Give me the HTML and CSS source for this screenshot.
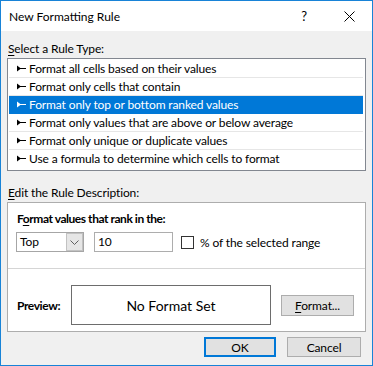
FILE: index.html
```html
<!DOCTYPE html>
<html lang="en">
  <head>
    <meta charset="UTF-8" />
    <meta name="viewport" content="width=device-width, initial-scale=1.0" />
    <title>New Formatting Rule</title>
    <link rel="stylesheet" href="styles.css">
  </head>
  <body>
    <div class="dialog">
      <!-- Title bar -->
      <header class="titlebar">
        <span class="title">New Formatting Rule</span>
        <span class="caption-btn help">?</span>
        <span class="caption-btn close">
          <svg width="11" height="11" viewBox="0 0 11 11">
            <path d="M0.5 0.5 L10.5 10.5 M10.5 0.5 L0.5 10.5" stroke="#000" stroke-width="1" fill="none" />
          </svg>
        </span>
      </header>

      <main class="content">
        <div class="label"><u>S</u>elect a Rule Type:</div>
        <ul class="rule-list">
          <li><svg class="arrow" width="9" height="7" viewBox="0 0 9 7"><path d="M0 0.5 L4 3.5 L0 6.5 Z M3 3 H9 V4 H3 Z" /></svg>Format all cells based on their values</li>
          <li><svg class="arrow" width="9" height="7" viewBox="0 0 9 7"><path d="M0 0.5 L4 3.5 L0 6.5 Z M3 3 H9 V4 H3 Z" /></svg>Format only cells that contain</li>
          <li class="selected"><svg class="arrow" width="9" height="7" viewBox="0 0 9 7"><path d="M0 0.5 L4 3.5 L0 6.5 Z M3 3 H9 V4 H3 Z" /></svg>Format only top or bottom ranked values</li>
          <li><svg class="arrow" width="9" height="7" viewBox="0 0 9 7"><path d="M0 0.5 L4 3.5 L0 6.5 Z M3 3 H9 V4 H3 Z" /></svg>Format only values that are above or below average</li>
          <li><svg class="arrow" width="9" height="7" viewBox="0 0 9 7"><path d="M0 0.5 L4 3.5 L0 6.5 Z M3 3 H9 V4 H3 Z" /></svg>Format only unique or duplicate values</li>
          <li class="last"><svg class="arrow" width="9" height="7" viewBox="0 0 9 7"><path d="M0 0.5 L4 3.5 L0 6.5 Z M3 3 H9 V4 H3 Z" /></svg>Use a formula to determine which cells to format</li>
        </ul>

        <div class="label label-edit"><u>E</u>dit the Rule Description:</div>
        <section class="group">
          <div class="group-top">
            <div class="heading">F<u>o</u>rmat values that rank in the:</div>
            <div class="controls">
              <div class="select">
                <span class="select-text">Top</span>
                <span class="select-btn">
                  <svg width="9" height="5" viewBox="0 0 9 5">
                    <path d="M0.5 0.5 L4.5 4.5 L8.5 0.5" stroke="#606060" stroke-width="1" fill="none" />
                  </svg>
                </span>
              </div>
              <div class="textbox">10</div>
              <span class="checkbox"></span>
              <span class="check-label">% of the selected ran<u>g</u>e</span>
            </div>
          </div>
          <div class="group-bottom">
            <span class="preview-label">Preview:</span>
            <div class="preview-box">No Format Set</div>
            <button class="btn btn-format"><u>F</u>ormat...</button>
          </div>
        </section>

        <div class="actions">
          <button class="btn btn-ok">OK</button>
          <button class="btn btn-cancel">Cancel</button>
        </div>
      </main>
    </div>
  </body>
</html>
```

FILE: styles.css
```css
/* General */
* {
  box-sizing: border-box;
  margin: 0;
  padding: 0;
}

body {
  font-family: Lato, "Noto Sans", sans-serif;
  font-size: 12px;
  letter-spacing: -0.12px;
  color: #000;
  background: #fff;
}

u {
  text-decoration: underline;
  text-underline-offset: 2px;
}

.dialog {
  width: 373px;
  height: 366px;
  border: 1px solid #1883d7;
  background: #f0f0f0;
}

/* Title bar */
.titlebar {
  display: flex;
  align-items: center;
  height: 30px;
  background: #fff;
}

.title {
  flex: 1;
  padding-left: 8px;
  font-size: 12px;
  letter-spacing: 0;
}

.caption-btn {
  display: flex;
  align-items: center;
  justify-content: center;
  width: 46px;
  height: 30px;
}

.help {
  padding-left: 2px;
  font-size: 13px;
}

/* Content */
.content {
  padding: 10px 6px 0;
}

.label {
  height: 15px;
  line-height: 15px;
  margin-bottom: 2px;
  padding-left: 1px;
}

.label-edit {
  margin-top: 14px;
}

/* Rule list */
.rule-list {
  list-style: none;
  background: #fff;
  border: 1px solid #828790;
  padding: 1px 2px 2px 1px;
}

.rule-list li {
  display: flex;
  align-items: center;
  height: 18px;
  line-height: 17px;
  padding-left: 8px;
  border-bottom: 1px solid #e6e6e6;
}

.rule-list li.last {
  border-bottom-color: transparent;
}

.rule-list li.selected {
  background: #0078d7;
  color: #fff;
  border-bottom-color: #0078d7;
}

.arrow {
  margin-right: 3px;
  fill: #000;
}

.selected .arrow {
  fill: #fff;
}

/* Description group */
.group {
  background: #fff;
  border: 1px solid #adadad;
}

.group-top {
  padding: 8px 8px 16px;
  border-bottom: 1px solid #d5d5d5;
}

.heading {
  height: 15px;
  line-height: 15px;
  font-weight: bold;
  letter-spacing: -0.45px;
  padding-left: 1px;
}

.controls {
  display: flex;
  align-items: center;
  height: 20px;
  margin-top: 6px;
}

.select {
  display: flex;
  width: 68px;
  height: 20px;
  border: 1px solid #a6a6a6;
  background: #fff;
}

.select-text {
  flex: 1;
  padding-left: 3px;
  line-height: 18px;
}

.select-btn {
  display: flex;
  align-items: center;
  justify-content: center;
  width: 17px;
  border: 1px solid #c2c2c2;
  background: #e6e6e6;
}

.textbox {
  width: 79px;
  height: 20px;
  margin-left: 10px;
  padding-left: 3px;
  line-height: 18px;
  border: 1px solid #adadad;
  background: #fff;
}

.checkbox {
  width: 13px;
  height: 13px;
  margin-left: 8px;
  border: 1px solid #333;
  background: #fff;
}

.check-label {
  margin-left: 6px;
}

.group-bottom {
  display: flex;
  align-items: center;
  padding: 16px 8px 6px;
}

.preview-label {
  width: 55px;
  padding-left: 1px;
  font-weight: bold;
  letter-spacing: -0.4px;
}

.preview-box {
  display: flex;
  align-items: center;
  justify-content: center;
  width: 200px;
  height: 40px;
  border: 1px solid #6d6d6d;
  font-size: 14px;
  letter-spacing: 0;
}

/* Buttons */
.btn {
  height: 20px;
  font-family: inherit;
  font-size: 12px;
  letter-spacing: inherit;
  color: #000;
  background: #e1e1e1;
  border: 1px solid #adadad;
}

.btn-format {
  width: 73px;
  height: 21px;
  margin-left: 10px;
}

.actions {
  display: flex;
  justify-content: flex-end;
  gap: 11px;
  margin-top: 5px;
  padding-right: 5px;
}

.btn-ok {
  width: 72px;
  border: 2px solid #0078d7;
}

.btn-cancel {
  width: 74px;
}
```
